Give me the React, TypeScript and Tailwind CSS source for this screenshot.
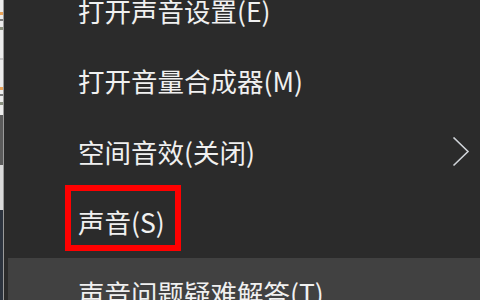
import React from "react";

const font = { fontFamily: '"Noto Sans CJK SC", "Noto Sans", sans-serif' };

function Row({ label, highlight, chevron, boxed }: { label: string; highlight?: boolean; chevron?: boolean; boxed?: boolean }) {
  return (
    <div className={`relative flex h-[70.5px] shrink-0 items-center pl-[70px] ${highlight ? "bg-[#414141]" : ""}`}>
      <span className="text-[26.5px] leading-none text-[#f0f0f0]" style={font}>{label}</span>
      {chevron && (
        <svg className="absolute left-[436px] top-[20px]" width="28" height="30" viewBox="0 0 28 30">
          <polyline points="9.5,0.5 24,14.5 9.5,28.5" fill="none" stroke="#cfd3d8" strokeWidth="1.6" />
        </svg>
      )}
      {boxed && <div className="pointer-events-none absolute left-[57px] top-[-2px] h-[66px] w-[116px] border-[6px] border-[#ff0000]" />}
    </div>
  );
}

export default function App() {
  return (
    <div className="flex h-[300px] w-[480px] overflow-hidden bg-[#2b2b2b]">
      <div className="flex w-[3px] shrink-0 flex-col">
        <div className="flex h-[115px] flex-col bg-[#ececec]">
          <div className="mt-[12px] h-[3px] bg-[#e8a35a]" />
          <div className="mt-[4px] h-[2px] bg-[#7a7a7a]" />
          <div className="mt-[6px] h-[3px] bg-[#8a9080]" />
          <div className="mt-[28px] h-[2px] bg-[#c8c8c8]" />
          <div className="mt-[27px] h-[3px] bg-[#e8a35a]" />
          <div className="mt-[4px] h-[2px] bg-[#7a7a7a]" />
          <div className="mt-[6px] h-[3px] bg-[#8a9080]" />
        </div>
        <div className="h-[50px] bg-[#5b5b5b]" />
        <div className="h-[45px] bg-[#dadada]" />
        <div className="flex-1 bg-[#2c333e]" />
      </div>
      <div className="w-[1px] shrink-0 bg-[#9a9a9a]" />
      <div className="flex min-w-0 flex-1 flex-col pl-[4px]">
        <div className="mt-[-24.5px] flex flex-col">
          <Row label="打开声音设置(E)" />
          <Row label="打开音量合成器(M)" />
          <Row label="空间音效(关闭)" chevron />
          <Row label="声音(S)" boxed />
          <Row label="声音问题疑难解答(T)" highlight />
        </div>
      </div>
    </div>
  );
}
